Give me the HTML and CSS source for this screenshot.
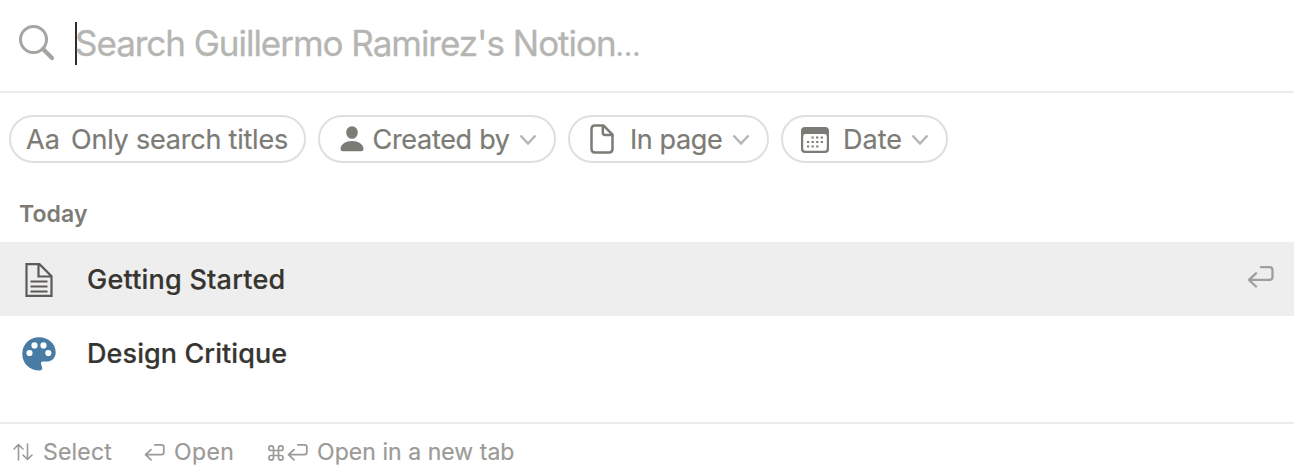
FILE: index.html
```html
<!DOCTYPE html>
<html lang="en">
<head>
<meta charset="utf-8">
<title>Search</title>
<link rel="stylesheet" href="styles.css">
</head>
<body>
<svg class="defs" width="0" height="0">
  <symbol id="chevron" viewBox="0 0 18 12"><path d="M1.500 1.500 9 9.500l7.500-8" fill="none" stroke="currentColor" stroke-width="2.500"/></symbol>
  <symbol id="enter" viewBox="0 0 27 24"><path d="M14 2.200h8.500q3 0 3 3v6.600q0 3-3 3H2M9 8.300 2 14.800l7 6.700" fill="none" stroke="currentColor" stroke-width="2.300" stroke-linecap="round" stroke-linejoin="round"/></symbol>
</svg>
<main class="search">
  <header class="search-bar">
    <svg class="search-icon" viewBox="0 0 36 36"><circle cx="14.500" cy="14.500" r="13" fill="none" stroke="currentColor" stroke-width="3"/><path d="M24 24l9 9" stroke="currentColor" stroke-width="4.200" stroke-linecap="round"/></svg>
    <span class="caret"></span>
    <span class="placeholder">Search Guillermo Ramirez's Notion<span class="ellipsis">…</span></span>
  </header>
  <nav class="filters">
    <div class="pill pill-titles"><span class="aa">Aa</span><span class="t-titles">Only search titles</span></div>
    <div class="pill pill-created">
      <svg class="person" viewBox="0 0 24 26"><ellipse cx="12" cy="6.500" rx="5.800" ry="6.300"/><path d="M.5 23c0-4.600 5.200-8 11.500-8s11.500 3.400 11.500 8q0 2.200-2.200 2.200H2.700Q.5 25.200.5 23z"/></svg>
      <span class="t-created">Created by</span><svg class="chevron"><use href="#chevron"/></svg>
    </div>
    <div class="pill pill-page">
      <svg class="page" viewBox="0 0 24 30"><path d="M5 1.500h8.500l9 9V25q0 3.500-3.500 3.500H5Q1.500 28.500 1.500 25V5Q1.500 1.500 5 1.500zM12.800 2v6.500q0 2.500 2.500 2.500H22" fill="none" stroke="currentColor" stroke-width="2.500"/></svg>
      <span class="t-page">In page</span><svg class="chevron"><use href="#chevron"/></svg>
    </div>
    <div class="pill pill-date">
      <svg class="calendar" viewBox="0 0 28 26"><path fill-rule="evenodd" d="M4 0h20q4 0 4 4v18q0 4-4 4H4q-4 0-4-4V4q0-4 4-4zM4.500 7Q2.200 7 2.200 9.200v12.300q0 2.300 2.300 2.300h19q2.300 0 2.300-2.300V9.200Q25.800 7 23.500 7z"/><path d="M10.500 10.500h12M6 15h17M6 19.500h12" fill="none" stroke="currentColor" stroke-width="2.200" stroke-dasharray="2.200 2.400"/></svg>
      <span class="t-date">Date</span><svg class="chevron"><use href="#chevron"/></svg>
    </div>
  </nav>
  <h2 class="heading">Today</h2>
  <ul class="results">
    <li class="result selected">
      <svg class="result-icon doc" viewBox="0 0 34 34"><g fill="none" stroke="currentColor" stroke-width="2.200"><path d="M4.500 1.100h13l12 12v19.800h-25zM16.500 1v12.500h13" /><path d="M8.500 18.500h17M8.500 23.500h17M8.500 28.500h17"/></g></svg>
      <span class="t-started">Getting Started</span>
      <svg class="enter"><use href="#enter"/></svg>
    </li>
    <li class="result">
      <svg class="result-icon palette" viewBox="0 0 34 34"><path fill-rule="evenodd" d="M17 .3C26.600.3 33.700 7 33.700 15.200c0 6-4.300 9.400-9.200 9.400h-3.700c-1.700 0-2.200 1.300-1.600 2.900l.8 2.600c.7 2.300-.3 3.500-2.500 3.500C7.500 33.600.3 26.500.3 17S7.500.3 17 .3zM12.500 5.300a3.100 3.100 0 1 0 0 6.200 3.100 3.100 0 0 0 0-6.200zm9 0a3.100 3.100 0 1 0 0 6.200 3.100 3.100 0 0 0 0-6.200zM7.500 12.900a3.100 3.100 0 1 0 0 6.200 3.100 3.100 0 0 0 0-6.200zm18.800 0a3.100 3.100 0 1 0 0 6.200 3.100 3.100 0 0 0 0-6.200z"/></svg>
      <span class="t-critique">Design Critique</span>
    </li>
  </ul>
  <footer class="hints">
    <div class="hint hint-select"><svg class="updown" viewBox="0 0 20 18"><path d="M5.500 17V1.500M1 6l4.500-4.500L10 6M14.500 1v15.500M10 12l4.500 4.500L19 12" fill="none" stroke="currentColor" stroke-width="1.600" stroke-linecap="round" stroke-linejoin="round"/></svg><span class="t-select">Select</span></div>
    <div class="hint hint-open"><svg class="enter-small"><use href="#enter"/></svg><span class="t-open">Open</span></div>
    <div class="hint"><svg class="command" viewBox="0 0 16 16"><path d="M5.500 5.500h5v5h-5zM5.500 5.500H3.200a2.300 2.300 0 1 1 2.300-2.300zM10.500 5.500h2.300a2.300 2.300 0 1 0-2.300-2.300zM5.500 10.500H3.200a2.300 2.300 0 1 0 2.300 2.300zM10.500 10.500h2.300a2.300 2.300 0 1 1-2.300 2.300z" fill="none" stroke="currentColor" stroke-width="1.700"/></svg><svg class="enter-small"><use href="#enter"/></svg><span class="t-tab">Open in a new tab</span></div>
  </footer>
</main>
</body>
</html>
```
FILE: styles.css
```css
* { box-sizing: border-box; }
body { margin: 0; background: #fff; font-family: Inter, sans-serif; overflow: hidden; }
svg { display: block; flex: none; fill: currentColor; }
span { white-space: nowrap; }
.defs { position: absolute; }
.search { height: 476px; display: flex; flex-direction: column; }
.search-bar { display: flex; align-items: center; height: 93px; flex: none; padding: 0 19px 5px; border-bottom: 2px solid #ececec; }
.search-icon { width: 36px; height: 36px; color: #a4a4a1; margin: 0 20px 0 0; }
.caret { width: 2px; height: 43px; background: #2d2d29; margin-right: -2px; }
.placeholder { font-size: 35px; line-height: 44px; color: #b5b5b2; letter-spacing: -1.03px; -webkit-text-stroke: 0.3px #b5b5b2; }
.ellipsis { font-size: 29px; line-height: 0; }
.filters { display: flex; gap: 12px; padding: 22px 9px 0; }
.pill { display: flex; align-items: center; height: 48px; border: 2px solid #dfdfde; border-radius: 24px; color: #7c7b76; font-size: 27px; -webkit-text-stroke: 0.2px #7c7b76; }
.pill-titles { width: 297px; padding-left: 15px; }
.pill-created { width: 238px; padding-left: 19.500px; }
.pill-page { width: 201px; padding-left: 20px; }
.pill-date { width: 167px; padding-left: 18px; }
.aa { width: 45px; }
.t-titles { letter-spacing: -0.22px; }
.t-created { letter-spacing: -0.3px; }
.t-page { letter-spacing: -0.4px; }
.person { width: 24px; height: 26px; margin-right: 9px; }
.page { width: 24px; height: 30px; margin-right: 16px; }
.calendar { width: 28px; height: 26px; margin: 1px 14px 0 0; }
.chevron { width: 18px; height: 12px; margin: 1px 17px 0 auto; color: #b5b5b2; }
.heading { margin: 37px 0 0 19px; height: 42px; font-size: 23px; line-height: 28px; font-weight: 600; color: #7c7b76; letter-spacing: 0.1px; }
.results { list-style: none; margin: 0; padding: 0; height: 180px; }
.result { display: flex; align-items: center; height: 74px; padding: 0 20px 0 22px; font-size: 27px; font-weight: 500; color: #373530; -webkit-text-stroke: 0.2px #373530; }
.selected { background: #eeeeee; }
.t-started { letter-spacing: 0.22px; }
.t-critique { letter-spacing: 0.08px; }
.result-icon { width: 34px; height: 34px; margin-right: 31px; }
.doc { color: #5c5b58; margin-top: 2px; }
.palette { color: #487ca5; margin-top: 2px; }
.enter { width: 27px; height: 24px; margin: -4px 0 0 auto; color: #a09f9c; }
.hints { display: flex; border-top: 2px solid #ececec; height: 54px; padding: 11px 13px 0; color: #9b9a97; font-size: 23px; -webkit-text-stroke: 0.2px #9b9a97; }
.hint { display: flex; align-items: center; height: 34px; }
.hint-select { width: 131px; }
.hint-open { width: 124px; }
.t-select { letter-spacing: 0.2px; }
.t-open { letter-spacing: 0.4px; }
.updown { width: 20px; height: 18px; margin-right: 10px; }
.enter-small { width: 21px; height: 19px; margin: 0 9px 0 0; }
.command { width: 16px; height: 16px; margin: 1px 3px 0 0; }
.t-tab { letter-spacing: 0.05px; }
```
